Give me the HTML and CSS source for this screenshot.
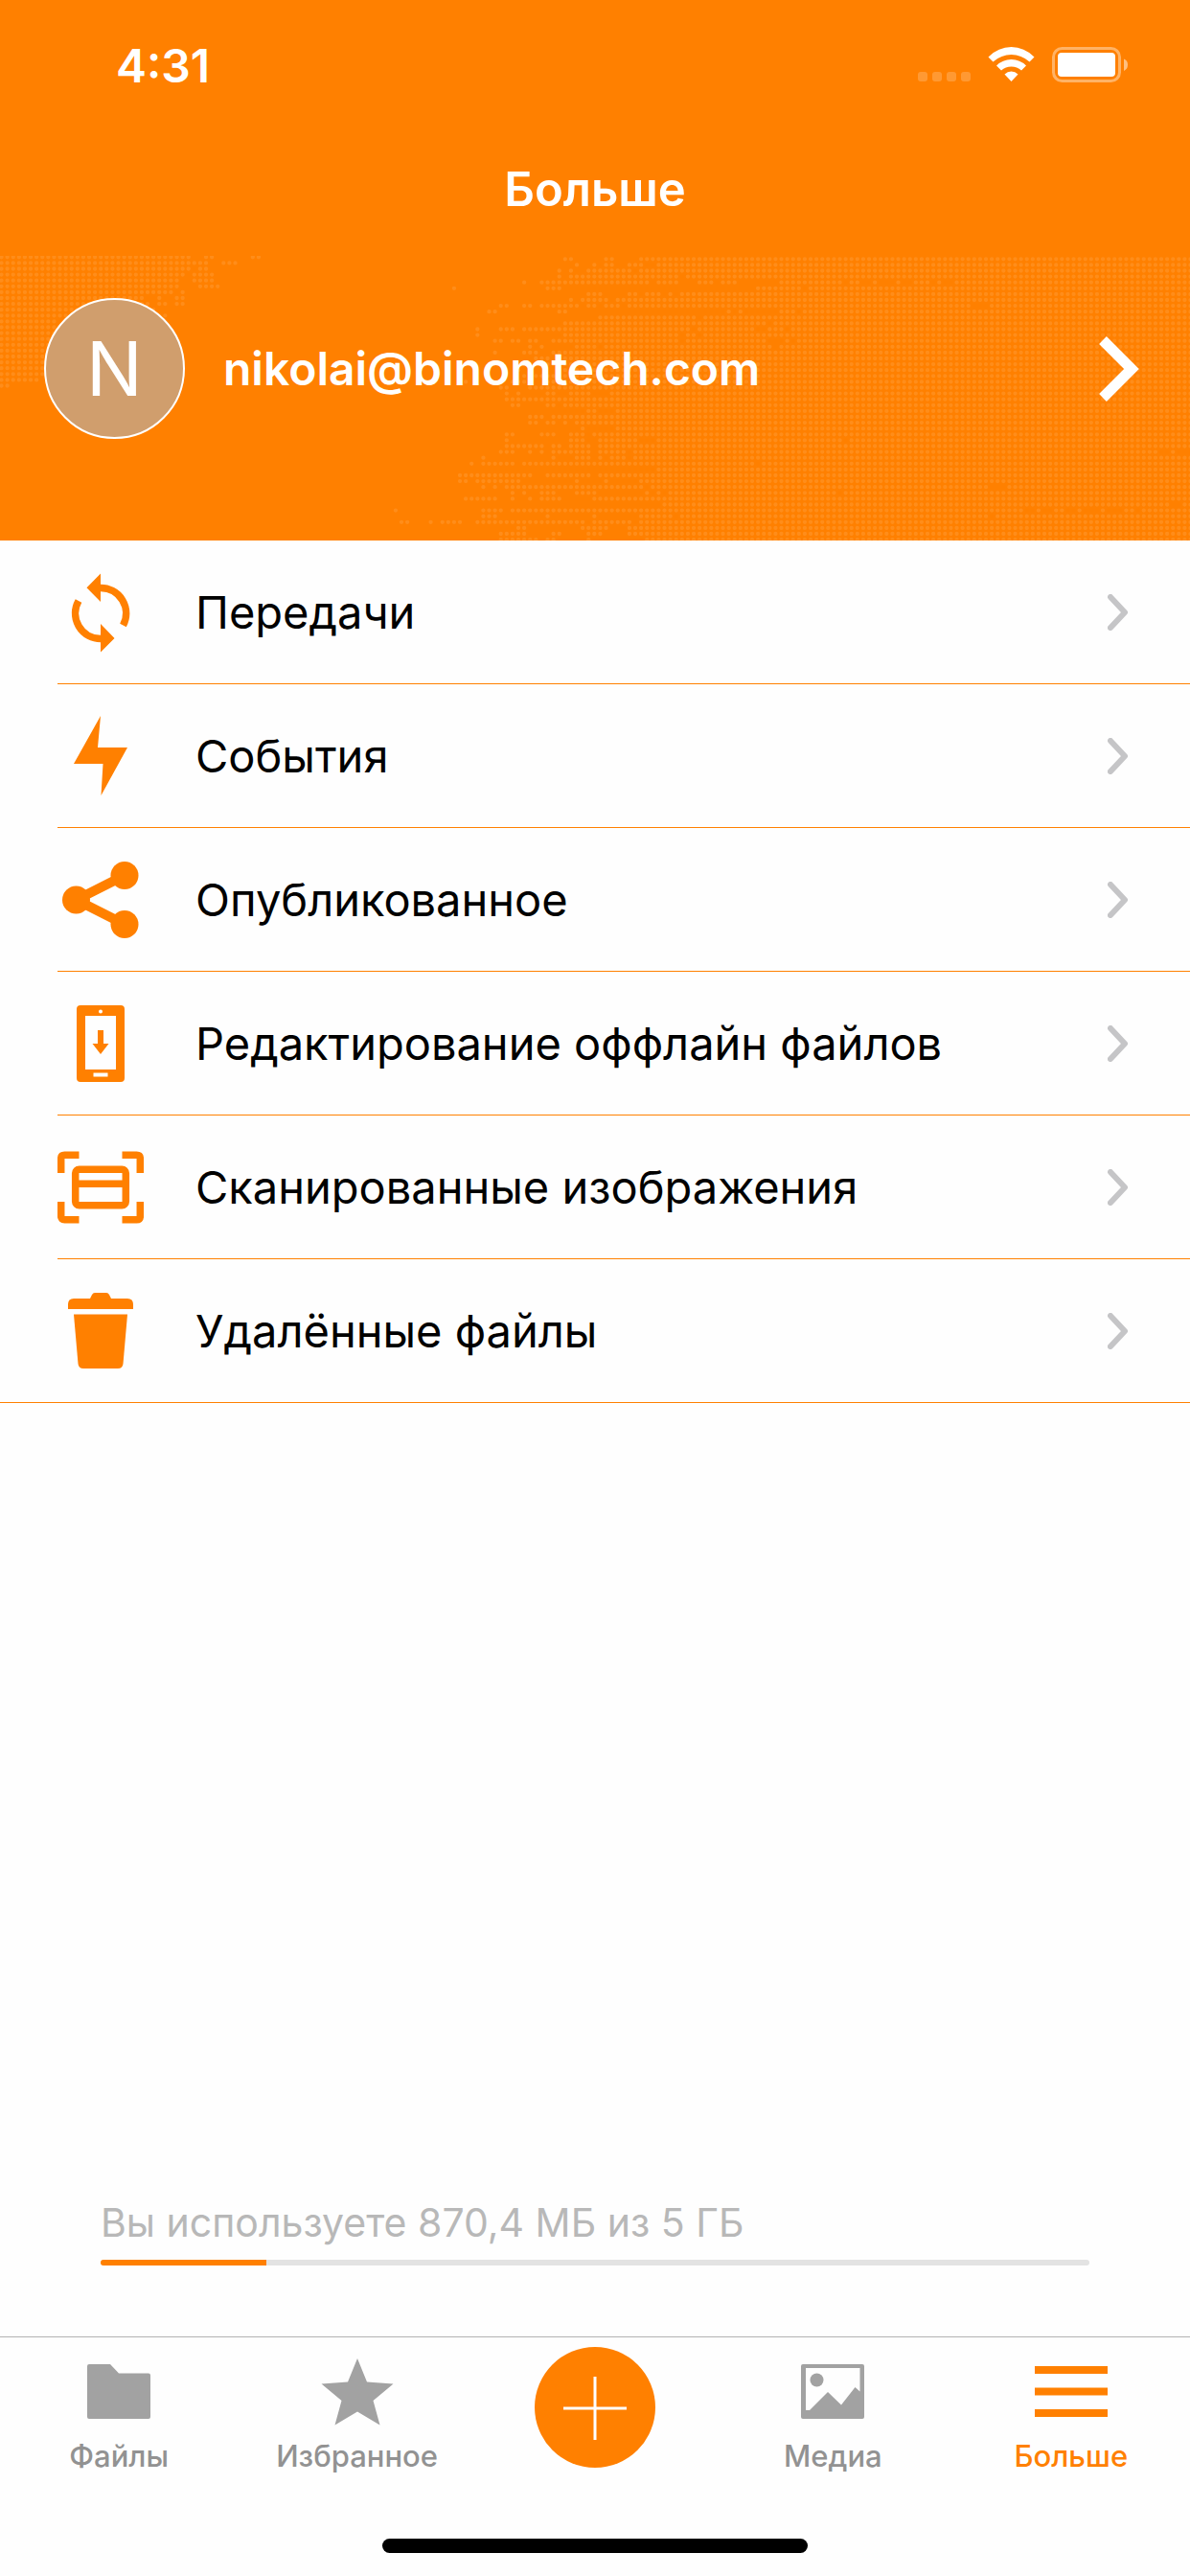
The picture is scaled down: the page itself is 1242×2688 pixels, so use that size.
FILE: index.html
```html
<!DOCTYPE html>
<html lang="ru">
<head>
    <meta charset="UTF-8">
    <meta name="viewport" content="width=device-width, initial-scale=1">
    <title>Больше</title>
    <link rel="stylesheet" href="styles.css">
</head>
<body>

<div class="page">
    <header class="header">
        <div class="status">
            <span class="time">4:31</span>
            <svg class="status-icons" viewBox="0 0 220 38">
                <g fill="#fff" fill-opacity=".2">
                    <rect x="0" y="26" width="10" height="10" rx="3"/>
                    <rect x="15" y="26" width="10" height="10" rx="3"/>
                    <rect x="30" y="26" width="10" height="10" rx="3"/>
                    <rect x="45" y="26" width="10" height="10" rx="3"/>
                </g>
                <g fill="#fff">
                    <path d="M73.5 10.5Q84 0 97.5 0T121.5 10.5L116.5 15.5Q108 8 97.5 8T78.5 15.5Z"/>
                    <path d="M82 19.5Q88.5 13 97.5 13T113 19.5L108 24.5Q103.5 20.5 97.5 20.5T87 24.5Z"/>
                    <path d="M90.5 28.5Q93.5 25.5 97.5 25.5T104.5 28.5L97.5 36Z"/>
                    <rect x="146" y="6" width="60" height="25" rx="4"/>
                </g>
                <rect x="141.5" y="1.5" width="69" height="34" rx="9" fill="none" stroke="#fff" stroke-opacity=".4" stroke-width="3"/>
                <path d="M215 12.5Q219 14 219 18.5T215 25Z" fill="#fff" fill-opacity=".5"/>
            </svg>
        </div>
        <h1 class="title">Больше</h1>
    </header>

    <a class="profile" href="#">
        <!-- dotted world map, one path segment per run of dots -->
        <svg class="map" viewBox="0 0 1242 298" preserveAspectRatio="xMidYMin slice">
            <g transform="translate(1.5 1.3) scale(6.1)">
                <path d="M0 0H32.5M35 0H36.5M43 0H44.5M0 1H35.5M38 1H40.5M0 2H32.5M34 2H35.5M0 3H31.5M33 3H36.5M0 4H30.5M33 4H36.5M0 5H30.5M34 5H37.5M0 6H29.5M31 6H31.5M0 7H24.5M27 7H27.5M30 7H31.5M0 8H25.5M27 8H28.5M30 8H31.5M0 9H26.5M0 10H28.5M0 11H9.5M0 12H9.5M0 13H9.5M0 14H9.5M0 15H9.5M0 16H9.5M0 17H9.5M0 18H9.5M0 19H8.5M0 20H7.5M0 21H6.5M0 22H1.5"/>
            </g>
            <g transform="translate(400.7 3.3) scale(6.1)">
                <path d="M31 0H32.5M38 0H39.5M44 0H138.5M33 1H33.5M36 1H36.5M38 1H39.5M42 1H44.5M47 1H138.5M30 2H30.5M32 2H32.5M35 2H40.5M41 2H42.5M44 2H138.5M30 3H30.5M32 3H50.5M52 3H138.5M24 4H24.5M27 4H45.5M47 4H50.5M54 4H56.5M58 4H60.5M68 4H78.5M80 4H81.5M84 4H84.5M88 4H88.5M91 4H93.5M95 4H95.5M98 4H138.5M12 5H12.5M28 5H30.5M64 5H71.5M73 5H138.5M35 6H37.5M42 6H43.5M45 6H47.5M49 6H49.5M51 6H138.5M32 7H32.5M34 7H38.5M40 7H138.5M20 8H21.5M24 8H25.5M27 8H33.5M35 8H36.5M38 8H40.5M42 8H100.5M104 8H138.5M18 9H19.5M30 9H31.5M59 9H59.5M61 9H61.5M68 9H70.5M72 9H138.5M37 10H53.5M55 10H138.5M31 11H65.5M67 11H138.5M16 12H16.5M20 12H22.5M24 12H52.5M54 12H63.5M66 12H68.5M70 12H138.5M16 13H16.5M31 13H50.5M52 13H53.5M55 13H138.5M19 14H20.5M22 14H23.5M25 14H26.5M29 14H50.5M52 14H65.5M69 14H69.5M71 14H138.5M25 15H25.5M27 15H27.5M33 15H36.5M38 15H66.5M68 15H138.5M19 16H19.5M24 16H26.5M29 16H138.5"/>
                <path d="M26 17H28.5M31 17H138.5M24 18H25.5M28 18H138.5M23 19H23.5M30 19H138.5M24 20H138.5M14 21H14.5M22 21H24.5M28 21H138.5M20 22H21.5M25 22H138.5M21 23H21.5M23 23H23.5M28 23H29.5M32 23H35.5M39 23H138.5"/>
                <path d="M21 24H138.5M22 25H23.5M28 25H29.5M31 25H138.5M35 26H36.5M40 26H138.5M25 27H27.5M29 27H138.5M25 28H26.5M28 28H29.5M31 28H31.5M33 28H138.5M34 29H34.5M40 29H138.5M21 30H22.5M27 30H29.5M32 30H34.5M36 30H138.5M21 31H21.5M32 31H34.5M37 31H43.5M47 31H78.5M80 31H138.5M21 32H27.5M29 32H30.5M32 32H35.5M37 32H138.5M20 33H22.5M25 33H25.5M27 33H27.5M29 33H35.5M37 33H41.5M43 33H132.5M135 33H135.5M17 34H17.5M29 34H29.5M33 34H35.5M37 34H37.5M39 34H41.5M43 34H138.5M15 35H15.5M17 35H22.5M24 35H63.5M65 35H138.5M47 36H138.5M13 37H25.5M28 37H35.5M37 37H138.5M13 38H14.5M16 38H23.5M33 38H33.5M38 38H38.5M44 38H138.5M17 39H17.5M19 39H19.5M21 39H44.5M46 39H103.5M107 39H138.5M22 40H22.5M24 40H24.5M27 40H29.5M33 40H36.5M45 40H45.5M47 40H47.5M49 40H77.5M79 40H138.5M14 41H19.5M22 41H22.5M25 41H25.5M27 41H30.5M36 41H138.5M48 42H134.5M137 42H138.5M2 43H2.5M17 43H20.5M22 43H109.5M112 43H112.5M115 43H116.5M119 43H119.5M123 43H123.5M127 43H128.5M130 43H138.5M17 44H19.5M28 44H28.5M36 44H36.5M44 44H49.5M51 44H103.5M105 44H138.5M3 45H4.5M8 45H8.5M10 45H13.5M16 45H34.5M36 45H42.5M44 45H138.5M23 46H24.5M34 46H38.5M42 46H138.5M20 47H24.5M29 47H30.5M35 47H37.5M42 47H138.5M20 48H26.5M28 48H29.5M35 48H35.5M45 48H138.5"/>
            </g>
        </svg>
        <span class="avatar">N</span>
        <span class="email">nikolai@binomtech.com</span>
        <svg class="profile-arrow" viewBox="0 0 44 70"><path d="M5 5L35 35L5 65" fill="none" stroke="#fff" stroke-width="11"/></svg>
    </a>

    <nav class="menu">
        <a class="item" href="#">
            <svg class="icon" viewBox="0 0 90 90">
                <path d="M45 19.500A26.500 26.500 0 0 1 68.500 58.500M45 72.500A26.500 26.500 0 0 1 22 33" fill="none" stroke="#ff8000" stroke-width="7.500"/>
                <path d="M45 4.500V34L30.500 19.300ZM45 57V86.500L59.500 72Z"/>
            </svg>
            <span class="label">Передачи</span>
            <svg class="arrow" viewBox="0 0 22 38"><path d="M3 3L18 19L3 35"/></svg>
        </a>
        <a class="item" href="#">
            <svg class="icon" viewBox="0 0 90 90"><path d="M45 3L42 36H73L45.500 86L47.500 53H17Z"/></svg>
            <span class="label">События</span>
            <svg class="arrow" viewBox="0 0 22 38"><path d="M3 3L18 19L3 35"/></svg>
        </a>
        <a class="item" href="#">
            <svg class="icon" viewBox="0 0 90 90">
                <circle cx="70" cy="19.500" r="14.500"/>
                <circle cx="19.500" cy="45" r="14.500"/>
                <circle cx="70" cy="70.500" r="14.500"/>
                <path d="M70 19.500L19.500 45L70 70.500" fill="none" stroke="#ff8000" stroke-width="10"/>
            </svg>
            <span class="label">Опубликованное</span>
            <svg class="arrow" viewBox="0 0 22 38"><path d="M3 3L18 19L3 35"/></svg>
        </a>
        <a class="item" href="#">
            <svg class="icon" viewBox="0 0 90 90">
                <path fill-rule="evenodd" d="M24 5H66Q70 5 70 9V81Q70 85 66 85H24Q20 85 20 81V9Q20 5 24 5ZM29 16V72H61V16ZM43 11.500a2 2 0 1 0 4 0a2 2 0 1 0 -4 0ZM37.500 75.500V79.500H52.500V75.500Z"/>
                <path d="M42 31H48V45H53.500L45 56L36.500 45H42Z"/>
            </svg>
            <span class="label">Редактирование оффлайн файлов</span>
            <svg class="arrow" viewBox="0 0 22 38"><path d="M3 3L18 19L3 35"/></svg>
        </a>
        <a class="item" href="#">
            <svg class="icon" viewBox="0 0 90 90">
                <g fill="none" stroke="#ff8000" stroke-width="7.500">
                    <path d="M3.700 30V15Q3.700 11.200 7.500 11.200H22.500M67.500 11.200H82.500Q86.300 11.200 86.300 15V30M86.300 60V75Q86.300 78.800 82.500 78.800H67.500M22.500 78.800H7.500Q3.700 78.800 3.700 75V60"/>
                    <rect x="18.700" y="26.200" width="52.600" height="37.600" rx="4"/>
                    <path d="M18.700 41.300H71.300"/>
                </g>
            </svg>
            <span class="label">Сканированные изображения</span>
            <svg class="arrow" viewBox="0 0 22 38"><path d="M3 3L18 19L3 35"/></svg>
        </a>
        <a class="item" href="#">
            <svg class="icon" viewBox="0 0 90 90">
                <path d="M11 22V17Q11 11 17 11H34L36 7Q37 5 39 5H51Q53 5 54 7L56 11H73Q79 11 79 17V22Z"/>
                <path d="M17 27.500H73L68.500 79Q68 84 63 84H27Q22 84 21.500 79Z"/>
            </svg>
            <span class="label">Удалённые файлы</span>
            <svg class="arrow" viewBox="0 0 22 38"><path d="M3 3L18 19L3 35"/></svg>
        </a>
    </nav>

    <section class="storage">
        <p class="storage-text">Вы используете 870,4 МБ из 5 ГБ</p>
        <div class="bar"><div class="bar-fill" style="width: 16.8%"></div></div>
    </section>

    <footer class="footer">
        <nav class="tabs">
            <a class="tab" href="#">
                <svg class="tab-icon" viewBox="0 0 76 70"><path d="M7 6H29L38 15.500H69Q71 15.500 71 17.500V61Q71 63 69 63H7Q5 63 5 61V8Q5 6 7 6Z"/></svg>
                <span>Файлы</span>
            </a>
            <a class="tab" href="#">
                <svg class="tab-icon" viewBox="0 0 76 70"><path d="M38 0L48 24.500L75.500 26.500L54.500 44L61.500 69.500L38 55.500L14.500 69.500L21.500 44L.5 26.500L28 24.500Z"/></svg>
                <span>Избранное</span>
            </a>
            <button class="add" type="button" aria-label="Добавить">
                <svg viewBox="0 0 126 126"><path d="M63 31V97M30 64H96" stroke="#fff" stroke-width="3"/></svg>
            </button>
            <a class="tab" href="#">
                <svg class="tab-icon" viewBox="0 0 76 70">
                    <path fill-rule="evenodd" d="M7 6H69Q71 6 71 8V61Q71 63 69 63H7Q5 63 5 61V8Q5 6 7 6ZM10 10V54H14L33 35L47 48.500L61.500 30L66.500 34.500V10Z"/>
                    <circle cx="21.500" cy="22.500" r="7"/>
                </svg>
                <span>Медиа</span>
            </a>
            <a class="tab active" href="#">
                <svg class="tab-icon" viewBox="0 0 76 70"><path d="M0 8H76V16H0ZM0 30.500H76V38.500H0ZM0 53H76V61H0Z"/></svg>
                <span>Больше</span>
            </a>
        </nav>
        <div class="home"></div>
    </footer>
</div>

</body>
</html>
```

FILE: styles.css
```css
*{
    margin: 0;
    padding: 0;
    box-sizing: border-box;
}
body{
    font-family: Inter, "Liberation Sans", sans-serif;
    background-color: #fefefe;
    color: #000;
}
a{
    color: inherit;
    text-decoration: none;
}
.page{
    display: flex;
    flex-direction: column;
    min-height: 100vh;
}
.header{
    background-color: #ff8000;
    color: #fff;
}
.status{
    display: flex;
    justify-content: space-between;
    align-items: center;
    height: 136px;
    padding: 0 64px 0 121px;
}
.time{
    font-size: 48px;
    font-weight: 600;
}
.status-icons{
    width: 220px;
    height: 38px;
}
.title{
    height: 131px;
    font-size: 49px;
    font-weight: 600;
    line-height: 124px;
    text-align: center;
}
.profile{
    position: relative;
    display: flex;
    align-items: center;
    padding: 44px 52px 106px 46px;
    background-color: #ff8000;
    color: #fff;
}
.map{
    position: absolute;
    left: 0;
    top: 0;
    width: 100%;
    height: 100%;
}
.map path{
    fill: none;
    stroke: #ff8d1a;
    stroke-width: .7;
    stroke-linecap: round;
    stroke-dasharray: .01 .99;
}
.avatar{
    position: relative;
    width: 147px;
    height: 147px;
    border: 2px solid #fff;
    border-radius: 50%;
    background-color: #d09e6d;
    font-size: 78px;
    line-height: 144px;
    text-align: center;
}
.email{
    position: relative;
    flex: 1;
    padding-left: 40px;
    font-size: 48px;
    font-weight: 600;
}
.profile-arrow{
    position: relative;
    width: 44px;
    height: 70px;
}
.menu{
    border-bottom: 1px solid #ff8000;
}
.item{
    display: flex;
    align-items: center;
    height: 150px;
    margin-left: 60px;
    padding-right: 64px;
    border-bottom: 1px solid #ff8000;
}
.item:last-child{
    height: 149px;
    border-bottom: 0;
}
.icon{
    width: 90px;
    height: 90px;
    fill: #ff8000;
}
.label{
    flex: 1;
    padding-left: 54px;
    font-size: 47px;
}
.arrow{
    width: 22px;
    height: 38px;
    fill: none;
    stroke: #c5c5c7;
    stroke-width: 6;
    stroke-linecap: round;
    stroke-linejoin: round;
}
.storage{
    margin-top: auto;
    padding: 0 105px 74px;
}
.storage-text{
    margin-bottom: 14px;
    color: #b8b8b8;
    font-size: 41px;
    line-height: 50px;
}
.bar{
    height: 6px;
    border-radius: 3px;
    background-color: #e3e3e3;
    overflow: hidden;
}
.bar-fill{
    height: 6px;
    background-color: #ff8000;
}
.footer{
    height: 250px;
    border-top: 1px solid #b2b2b2;
}
.tabs{
    display: grid;
    grid-template-columns: repeat(5, 1fr);
    height: 210px;
    padding-top: 10px;
}
.tab{
    display: flex;
    flex-direction: column;
    align-items: center;
    padding-top: 12px;
    color: #929292;
    font-size: 31px;
    font-weight: 500;
    line-height: 36px;
}
.tab-icon{
    width: 76px;
    height: 70px;
    margin-bottom: 14px;
    fill: #a2a2a2;
}
.active{
    color: #ff8000;
}
.active .tab-icon{
    fill: #ff8000;
}
.add{
    justify-self: center;
    width: 126px;
    height: 126px;
    border: 0;
    border-radius: 50%;
    background-color: #ff8000;
}
.home{
    width: 444px;
    height: 15px;
    margin: 0 auto;
    border-radius: 8px;
    background-color: #000;
}
```
